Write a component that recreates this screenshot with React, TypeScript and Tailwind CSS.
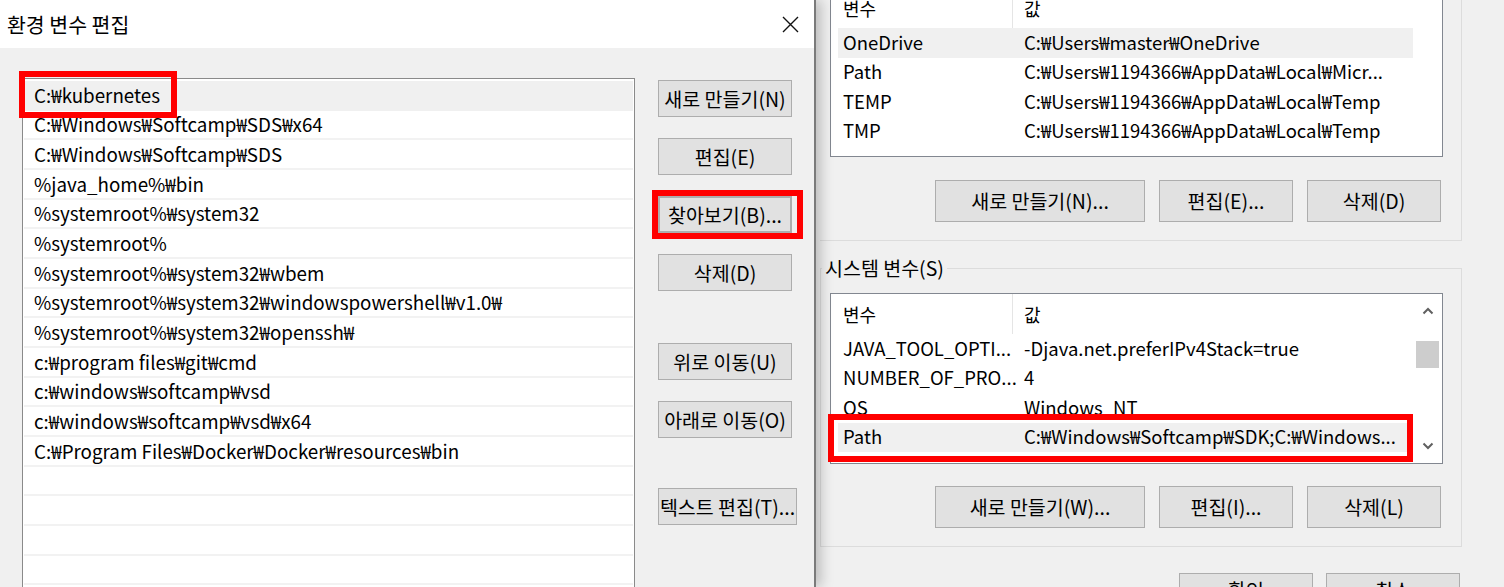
import React from "react";

const pathRows = [
  "C:₩kubernetes",
  "C:₩Windows₩Softcamp₩SDS₩x64",
  "C:₩Windows₩Softcamp₩SDS",
  "%java_home%₩bin",
  "%systemroot%₩system32",
  "%systemroot%",
  "%systemroot%₩system32₩wbem",
  "%systemroot%₩system32₩windowspowershell₩v1.0₩",
  "%systemroot%₩system32₩openssh₩",
  "c:₩program files₩git₩cmd",
  "c:₩windows₩softcamp₩vsd",
  "c:₩windows₩softcamp₩vsd₩x64",
  "C:₩Program Files₩Docker₩Docker₩resources₩bin",
  "",
  "",
  "",
  "",
  "",
];

const userVars = [
  { name: "OneDrive", value: "C:₩Users₩master₩OneDrive", selected: true },
  { name: "Path", value: "C:₩Users₩1194366₩AppData₩Local₩Micr..." },
  { name: "TEMP", value: "C:₩Users₩1194366₩AppData₩Local₩Temp" },
  { name: "TMP", value: "C:₩Users₩1194366₩AppData₩Local₩Temp" },
];

const systemVars = [
  { name: "JAVA_TOOL_OPTI...", value: "-Djava.net.preferIPv4Stack=true" },
  { name: "NUMBER_OF_PRO...", value: "4" },
  { name: "OS", value: "Windows_NT" },
  { name: "Path", value: "C:₩Windows₩Softcamp₩SDK;C:₩Windows...", selected: true },
];

function SideButton({
  children,
  className = "",
}: {
  children: React.ReactNode;
  className?: string;
}) {
  return (
    <button
      className={`flex h-[37px] w-[134px] shrink-0 items-center justify-center whitespace-nowrap border border-[#adadad] bg-[#e1e1e1] text-[19.5px] leading-none text-black ${className}`}
    >
      {children}
    </button>
  );
}

function WideButton({
  children,
  className = "",
}: {
  children: React.ReactNode;
  className?: string;
}) {
  return (
    <button
      className={`flex h-[42px] shrink-0 items-center justify-center whitespace-nowrap border border-[#adadad] bg-[#e1e1e1] text-[19.5px] leading-none text-black ${className}`}
    >
      {children}
    </button>
  );
}

function VarHeader() {
  return (
    <div className="flex h-[40px] items-center bg-white pl-[7px] text-[18px]">
      <div className="flex h-full w-[175px] items-center border-r border-[#e5e5e5] pl-[5px]">
        변수
      </div>
      <div className="pl-[11px]">값</div>
    </div>
  );
}

function VarRow({
  name,
  value,
  selected,
}: {
  name: string;
  value: string;
  selected?: boolean;
}) {
  return (
    <div className="pl-[7px]">
      <div
        className={`flex h-[29.5px] w-[575px] items-center overflow-hidden whitespace-nowrap text-[18.5px] ${
          selected ? "bg-[#f0f0f0]" : ""
        }`}
      >
        <div className="w-[175px] shrink-0 pl-[5px]">{name}</div>
        <div className="pl-[11px]">{value}</div>
      </div>
    </div>
  );
}

function Chevron({ up }: { up?: boolean }) {
  return (
    <svg width="12" height="8" viewBox="0 0 12 8" fill="none">
      <polyline
        points={up ? "1.5,6.5 6,2 10.5,6.5" : "1.5,1.5 6,6 10.5,1.5"}
        stroke="#606060"
        strokeWidth="2"
      />
    </svg>
  );
}

export default function App() {
  return (
    <div className="flex h-[587px] w-[1504px] overflow-hidden bg-[#f0f0f0] font-['Noto_Sans_CJK_KR',sans-serif] text-black">
      {/* Edit environment variable dialog */}
      <div className="relative z-10 flex w-[816px] shrink-0 flex-col border-r-2 border-[#7a7a7a] bg-[#f0f0f0] shadow-[5px_0_12px_rgba(0,0,0,0.22)]">
        <div className="flex h-[48px] shrink-0 items-center justify-between bg-white pl-[7px] pr-[15px]">
          <span className="text-[20.5px]">환경 변수 편집</span>
          <svg width="17" height="17" viewBox="0 0 17 17">
            <path d="M1 1L16 16M16 1L1 16" stroke="#111" strokeWidth="1.4" />
          </svg>
        </div>

        <div className="flex flex-1 pl-[22px] pt-[30px]">
          {/* path list */}
          <div className="relative h-[560px] w-[613px] shrink-0 border border-[#8a8a8a] bg-white px-px pt-[2px]">
            {pathRows.map((row, i) => (
              <div
                key={i}
                className={`flex h-[29.67px] items-center whitespace-nowrap border-b-2 pl-[10px] text-[18.8px] ${
                  i === 0
                    ? "border-[#f0f0f0] bg-[#f0f0f0]"
                    : "border-[#f2f2f2] bg-white"
                }`}
              >
                {row}
              </div>
            ))}
            <div className="absolute left-[-4px] top-[-8px] h-[47px] w-[158px] border-[6px] border-[#ff0000]" />
          </div>

          {/* side buttons */}
          <div className="ml-[23px] flex flex-col pt-[2px]">
            <SideButton>새로 만들기(N)</SideButton>
            <SideButton className="mt-[21px]">편집(E)</SideButton>
            <div className="relative mt-[21px]">
              <SideButton className="border-2 border-[#0078d7]">
                찾아보기(B)...
              </SideButton>
              <div className="absolute -inset-[6px] border-[6px] border-[#ff0000]" />
            </div>
            <SideButton className="mt-[21px]">삭제(D)</SideButton>
            <SideButton className="mt-[52px]">위로 이동(U)</SideButton>
            <SideButton className="mt-[21px]">아래로 이동(O)</SideButton>
            <SideButton className="mt-[50px] w-[139px]">텍스트 편집(T)...</SideButton>
          </div>
        </div>
      </div>

      {/* Environment variables window behind */}
      <div className="flex flex-1 flex-col pl-[4px]">
        {/* user variables group */}
        <div className="-mt-[13px] flex w-[642px] flex-col border-b border-r border-[#dcdcdc] pb-[18px] pl-[10px]">
          <div className="h-[170px] w-[613px] border border-[#828790] bg-white">
            <VarHeader />
            {userVars.map((v) => (
              <VarRow key={v.name} {...v} />
            ))}
          </div>
          <div className="mt-[23px] flex justify-end gap-[14px] pr-[20px]">
            <WideButton className="w-[210px]">새로 만들기(N)...</WideButton>
            <WideButton className="w-[134px]">편집(E)...</WideButton>
            <WideButton className="w-[134px]">삭제(D)</WideButton>
          </div>
        </div>

        {/* system variables group */}
        <fieldset className="mt-[14px] w-[642px] border border-[#dcdcdc] p-0">
          <legend className="ml-px px-[3px] text-[19.5px] leading-[26px]">
            시스템 변수(S)
          </legend>
          <div className="flex flex-col pb-[18px] pl-[9px]">
            <div className="relative mt-[12px] flex h-[171px] w-[613px] border border-[#828790] bg-white">
              <div className="w-[582px]">
                <VarHeader />
                {systemVars.map((v) => (
                  <VarRow key={v.name} {...v} />
                ))}
              </div>
              <div className="flex flex-1 flex-col items-center">
                <div className="flex h-[34px] items-center">
                  <Chevron up />
                </div>
                <div className="mt-[13px] h-[27px] w-[23px] bg-[#cdcdcd]" />
                <div className="flex-1" />
                <div className="flex h-[34px] items-center">
                  <Chevron />
                </div>
              </div>
              <div className="absolute left-[-3px] top-[120px] h-[48px] w-[585px] border-[6px] border-[#ff0000]" />
            </div>
            <div className="mt-[22px] flex justify-end gap-[14px] pr-[20px]">
              <WideButton className="w-[210px]">새로 만들기(W)...</WideButton>
              <WideButton className="w-[134px]">편집(I)...</WideButton>
              <WideButton className="w-[134px]">삭제(L)</WideButton>
            </div>
          </div>
        </fieldset>

        {/* dialog buttons */}
        <div className="mt-[26px] flex w-[642px] justify-end gap-[13px] pr-[2px]">
          <WideButton className="w-[134px] items-start pt-[6px]">확인</WideButton>
          <WideButton className="w-[134px] items-start pt-[6px]">취소</WideButton>
        </div>
      </div>
    </div>
  );
}
